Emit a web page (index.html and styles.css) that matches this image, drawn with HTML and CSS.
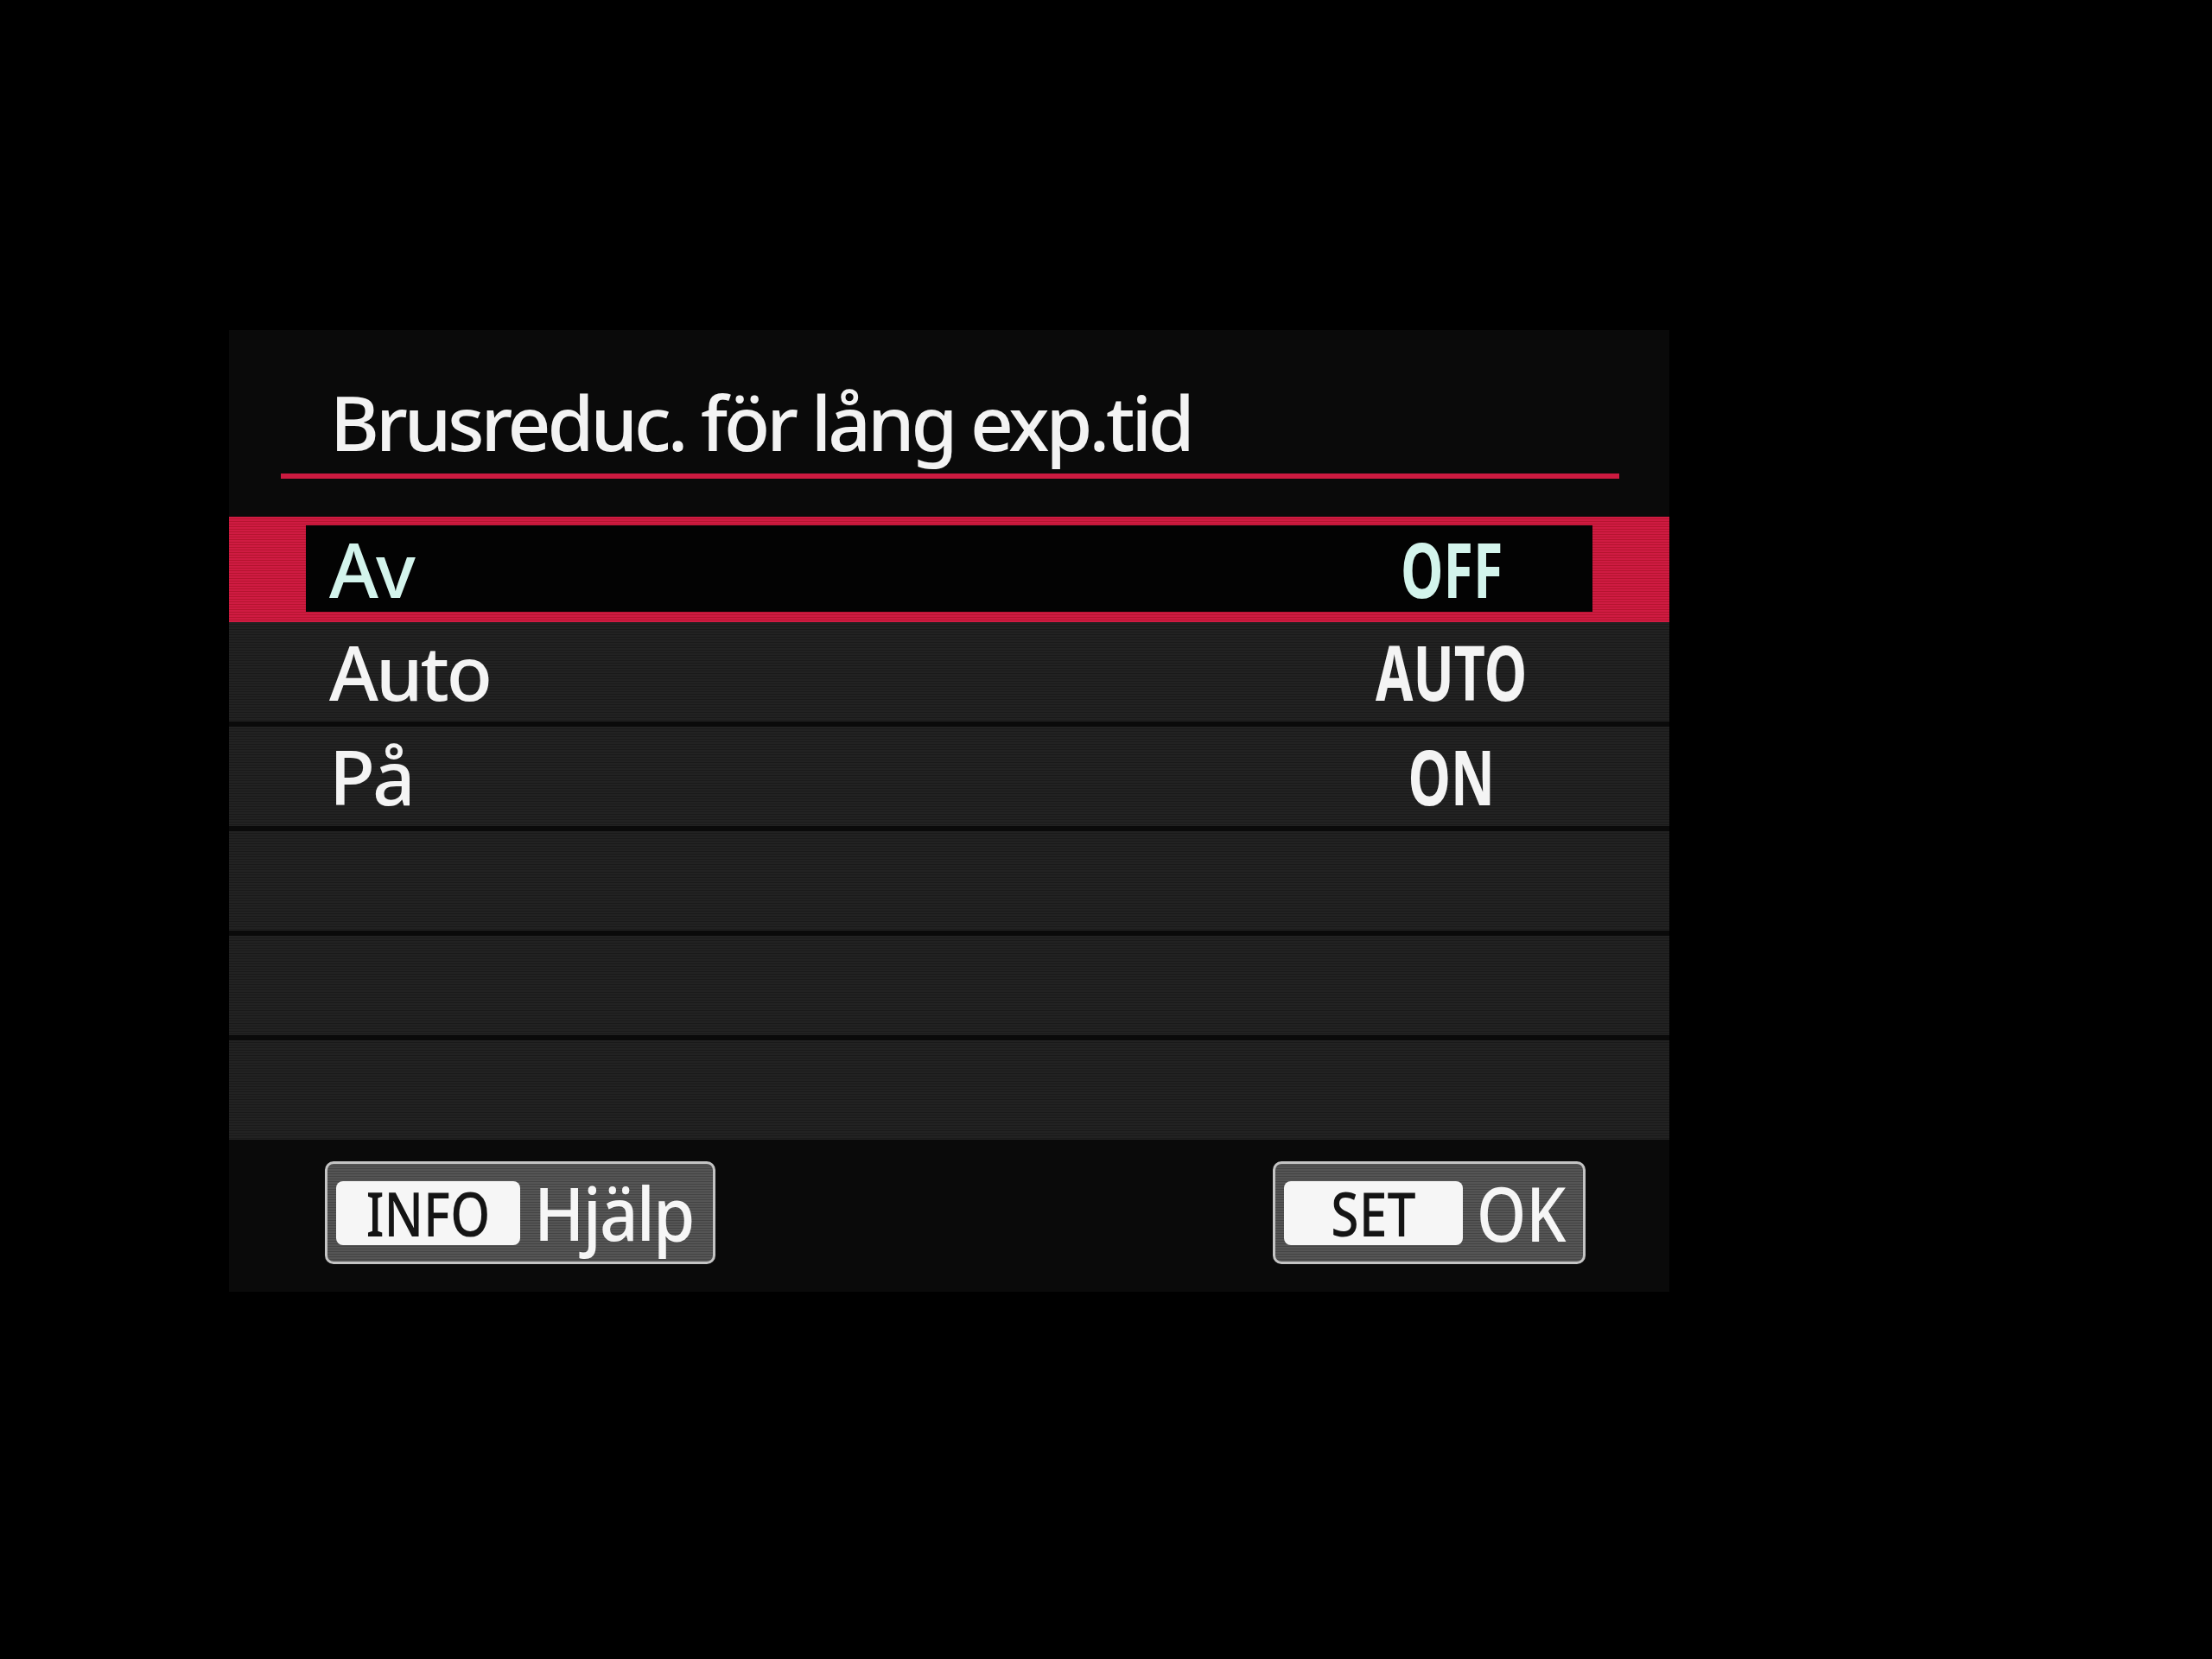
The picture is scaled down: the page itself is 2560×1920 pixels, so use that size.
FILE: index.html
```html
<!DOCTYPE html>
<html lang="sv">
<head>
<meta charset="utf-8">
<title>Brusreduc. för lång exp.tid</title>
<link rel="stylesheet" href="styles.css">
</head>
<body>
<div class="screen">
  <div class="panel">
    <h1 class="title">Brusreduc. för lång exp.tid</h1>
    <div class="rule"></div>
    <div class="list">
      <div class="row selected">
        <div class="inner">
          <span class="label">Av</span>
          <span class="value"><span class="vt">OFF</span></span>
        </div>
      </div>
      <div class="row plain">
        <span class="label">Auto</span>
        <span class="value"><span class="vt">AUTO</span></span>
      </div>
      <div class="row plain">
        <span class="label">På</span>
        <span class="value"><span class="vt">ON</span></span>
      </div>
      <div class="row plain"></div>
      <div class="row plain"></div>
      <div class="row plain"></div>
    </div>
    <div class="footer">
      <div class="btn btn-info">
        <span class="key"><span class="key-text">INFO</span></span>
        <span class="btn-label"><span class="bl-text">Hjälp</span></span>
      </div>
      <div class="btn btn-set">
        <span class="key"><span class="key-text">SET</span></span>
        <span class="btn-label"><span class="bl-text">OK</span></span>
      </div>
    </div>
  </div>
</div>
</body>
</html>
```

FILE: styles.css
```css
html, body {
  margin: 0;
  padding: 0;
  background: #000;
}

body {
  width: 2560px;
  height: 1920px;
  overflow: hidden;
  font-family: "Noto Sans", "Open Sans", "DejaVu Sans", sans-serif;
}

.screen {
  padding: 382px 0 0 265px;
}

.panel {
  width: 1667px;
  height: 1113px;
  background: #0a0a0a;
  box-sizing: border-box;
  display: flex;
  flex-direction: column;
}

.title {
  margin: 63px 0 0 0;
  padding-left: 117px;
  font-size: 87px;
  line-height: 1;
  font-weight: 500;
  letter-spacing: -4px;
  color: #f3f3f3;
  white-space: nowrap;
}

.rule {
  margin: 16px 58px 0 60px;
  height: 6px;
  background: #cc1a40;
}

.list {
  margin-top: 44px;
  display: flex;
  flex-direction: column;
}

.row {
  display: flex;
  align-items: center;
  box-sizing: border-box;
  font-size: 87px;
  line-height: 1;
  font-weight: 500;
  color: #f4f4f4;
}

.row.plain {
  height: 115px;
  padding: 0 102px 0 116px;
  background: repeating-linear-gradient(180deg, #222 0 2px, #1a1a1a 2px 3px);
}

.row.plain + .row.plain {
  margin-top: 6px;
}

.row.selected {
  height: 122px;
  padding: 10px 89px 12px 89px;
  background: repeating-linear-gradient(180deg, #cf1b42 0 2px, #b5142f 2px 3px);
}

.row.selected .inner {
  flex: 1;
  height: 100%;
  display: flex;
  align-items: center;
  padding: 0 13px 0 27px;
  background: #030303;
  color: #d3f4ec;
}

.label {
  flex: 1;
  letter-spacing: -3px;
  white-space: nowrap;
}

.value {
  width: 300px;
  display: flex;
  justify-content: center;
}

.vt {
  display: inline-block;
  font-weight: 700;
  transform: scaleX(0.72);
  transform-origin: center;
}

.footer {
  margin-top: 25px;
  display: flex;
  justify-content: space-between;
  align-items: flex-start;
  padding: 0 97px 0 111px;
}

.btn {
  height: 119px;
  box-sizing: border-box;
  border: 3px solid #c4c4c4;
  border-radius: 10px;
  background: repeating-linear-gradient(180deg, #555 0 2px, #444 2px 3px);
  display: flex;
  align-items: center;
  padding-left: 10px;
}

.btn-info {
  width: 452px;
}

.btn-set {
  width: 362px;
}

.key {
  width: 213px;
  height: 74px;
  border-radius: 8px;
  background: #f6f6f6;
  display: flex;
  align-items: center;
  justify-content: center;
}

.key-text {
  display: inline-block;
  font-size: 70px;
  line-height: 1;
  font-weight: 500;
  color: #141414;
  transform: scaleX(0.84);
}

.btn-label {
  font-size: 85px;
  line-height: 1;
  font-weight: 500;
  color: #f6f6f6;
}

.bl-text {
  display: inline-block;
  transform-origin: left center;
}

.btn-info .btn-label {
  margin-left: 16px;
}

.btn-info .bl-text {
  letter-spacing: -2px;
  transform: scaleX(0.92);
}

.btn-set .btn-label {
  margin-left: 16px;
  font-size: 87px;
}

.btn-set .bl-text {
  transform: scaleX(0.84);
}
```
